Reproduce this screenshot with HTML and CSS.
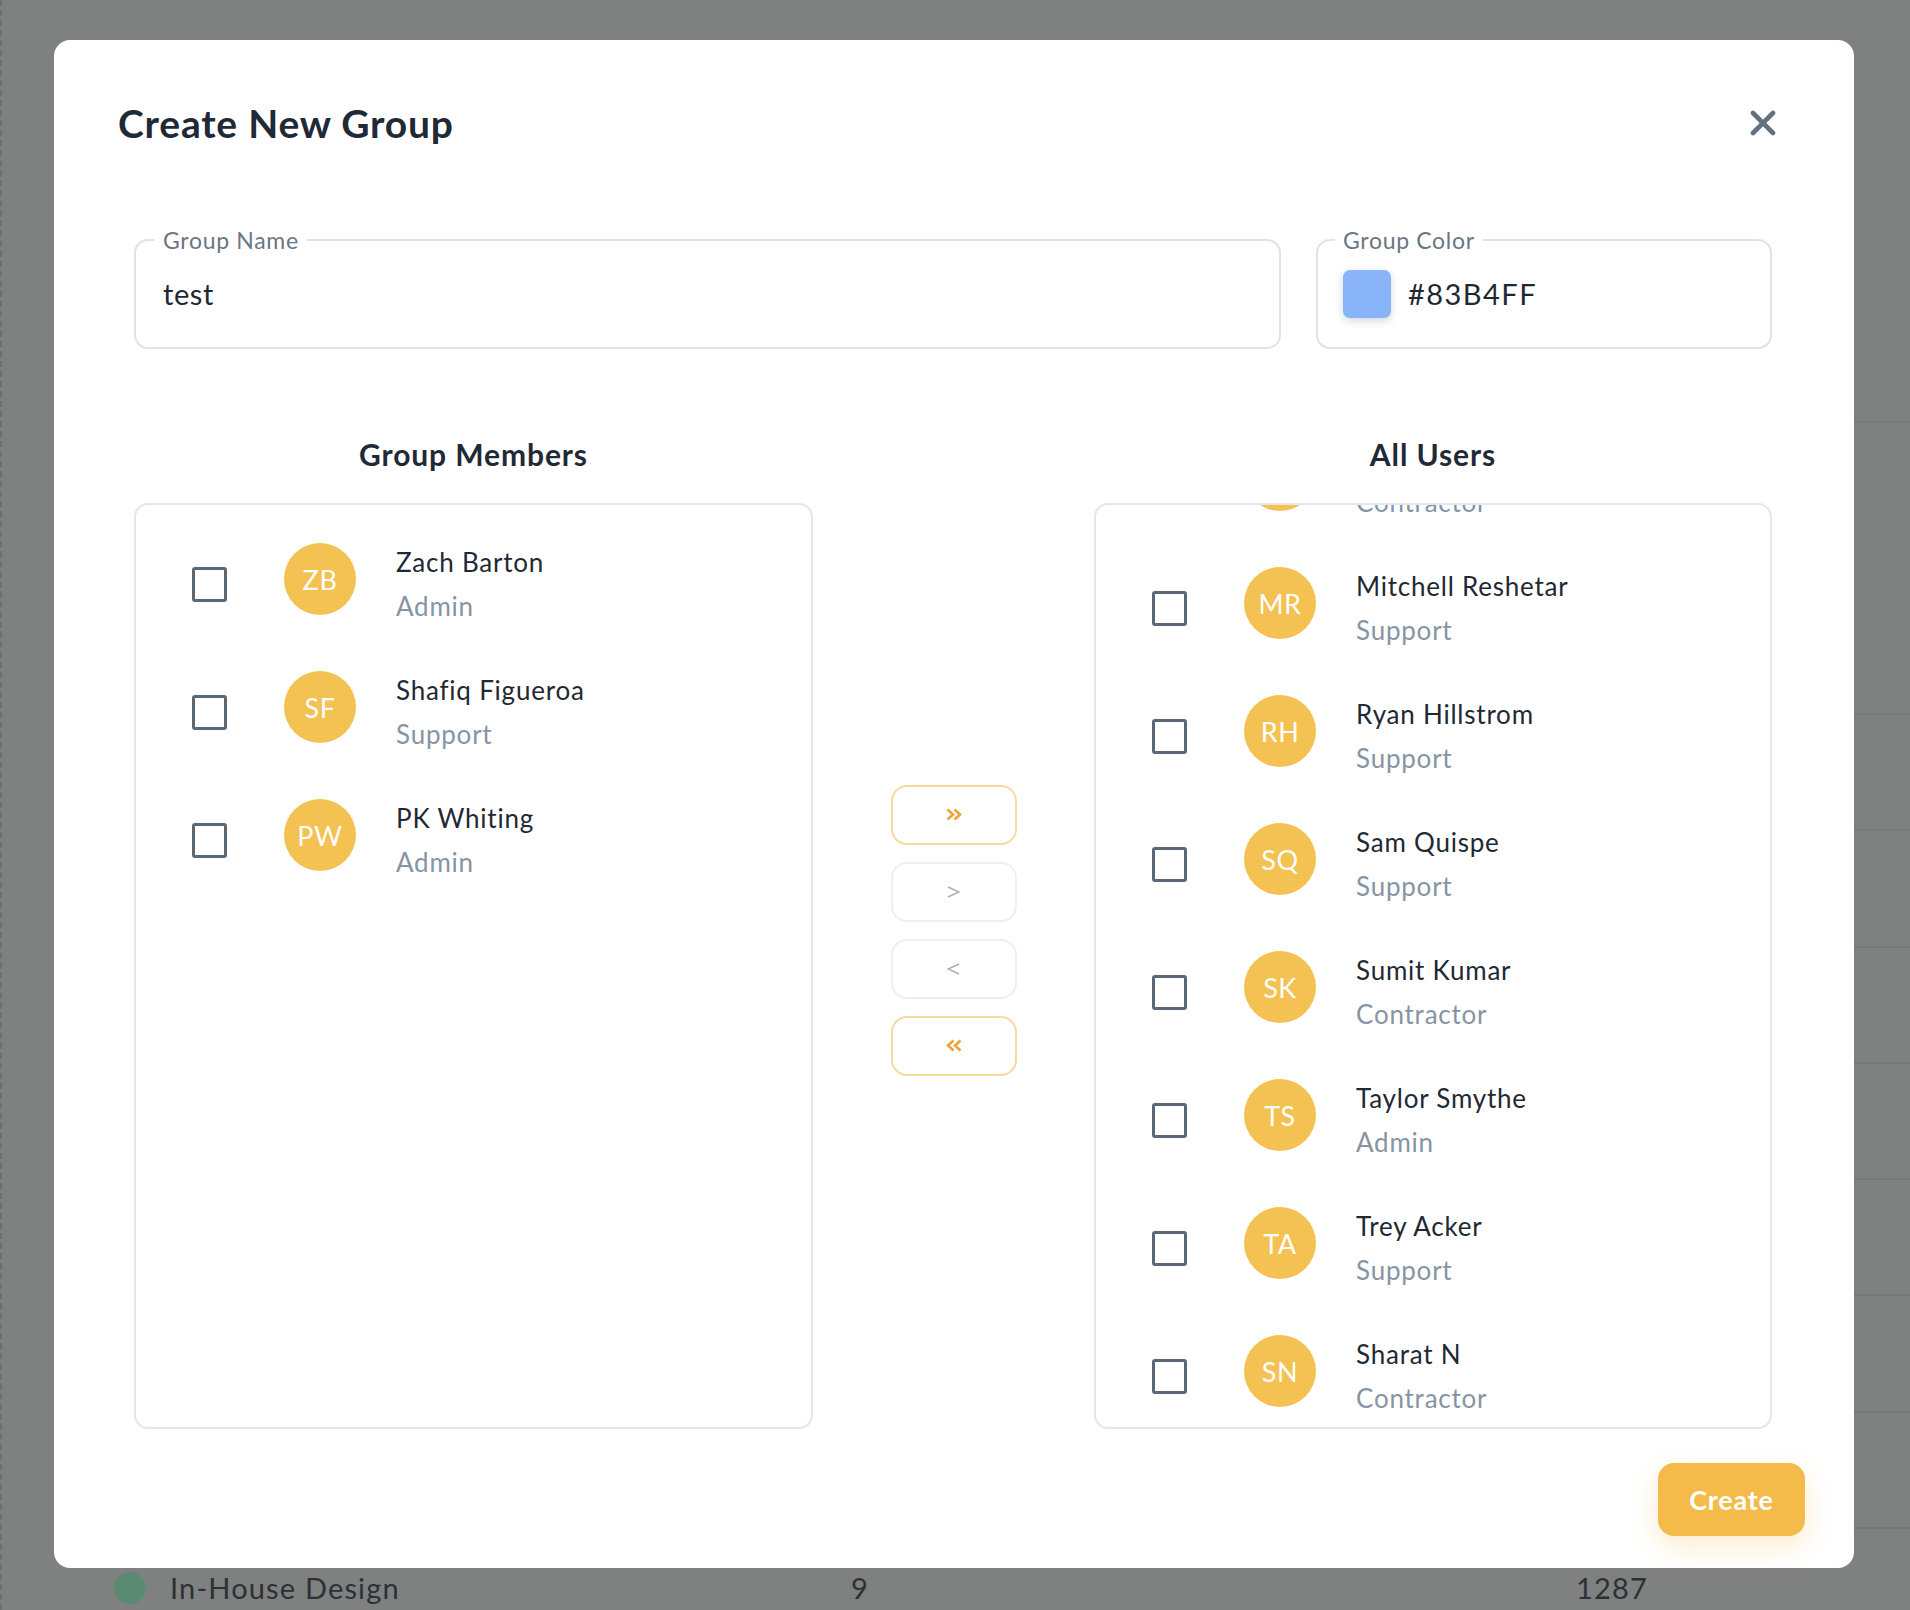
FILE: index.html
```html
<!DOCTYPE html>
<html lang="en">
<head>
<meta charset="utf-8">
<title>Create New Group</title>
<link rel="stylesheet" href="styles.css">
</head>
<body>
<div class="page">
  <div class="bg-table">
    <div class="bg-row bg-row-head"></div>
    <div class="bg-row bg-row-tall"></div>
    <div class="bg-row"></div>
    <div class="bg-row"></div>
    <div class="bg-row"></div>
    <div class="bg-row"></div>
    <div class="bg-row"></div>
    <div class="bg-row"></div>
    <div class="bg-row"></div>
    <div class="bg-row bg-row-data">
      <span class="bg-dot"></span>
      <span class="bg-name">In-House Design</span>
      <span class="bg-count">9</span>
      <span class="bg-total">1287</span>
    </div>
  </div>
</div>

<div class="modal">
  <div class="modal-header">
    <h1 class="modal-title">Create New Group</h1>
    <button class="close-btn" aria-label="Close">
      <svg width="26" height="26" viewBox="0 0 26 26"><path d="M3 3 L23 23 M23 3 L3 23" stroke="#627080" stroke-width="4.6" stroke-linecap="round" fill="none"/></svg>
    </button>
  </div>

  <div class="fields">
    <fieldset class="field field-name">
      <legend>Group Name</legend>
      <div class="field-value">test</div>
    </fieldset>
    <fieldset class="field field-color">
      <legend>Group Color</legend>
      <div class="field-value color-value"><span class="swatch"></span><span>#83B4FF</span></div>
    </fieldset>
  </div>

  <div class="transfer">
    <div class="list-col">
      <h2 class="list-title">Group Members</h2>
      <div class="panel">
        <div class="list">
          <div class="row"><span class="check"></span><span class="avatar">ZB</span><div class="info"><div class="name">Zach Barton</div><div class="role">Admin</div></div></div>
          <div class="row"><span class="check"></span><span class="avatar">SF</span><div class="info"><div class="name">Shafiq Figueroa</div><div class="role">Support</div></div></div>
          <div class="row"><span class="check"></span><span class="avatar">PW</span><div class="info"><div class="name">PK Whiting</div><div class="role">Admin</div></div></div>
        </div>
      </div>
    </div>

    <div class="mid-col">
      <button class="move-btn active" aria-label="Move all right">
        <svg width="16" height="13" viewBox="0 0 16 13"><path d="M1.5 1.5 L7 6.5 L1.5 11.5 M8.5 1.5 L14 6.5 L8.5 11.5" stroke="#eda33a" stroke-width="2.6" fill="none"/></svg>
      </button>
      <button class="move-btn" aria-label="Move right">
        <svg width="13" height="12" viewBox="0 0 13 12"><path d="M1 1 L12 6 L1 11" stroke="#a4adb9" stroke-width="1.5" fill="none"/></svg>
      </button>
      <button class="move-btn" aria-label="Move left">
        <svg width="13" height="12" viewBox="0 0 13 12"><path d="M12 1 L1 6 L12 11" stroke="#a4adb9" stroke-width="1.5" fill="none"/></svg>
      </button>
      <button class="move-btn active" aria-label="Move all left">
        <svg width="16" height="13" viewBox="0 0 16 13"><path d="M14.5 1.5 L9 6.5 L14.5 11.5 M7.5 1.5 L2 6.5 L7.5 11.5" stroke="#eda33a" stroke-width="2.6" fill="none"/></svg>
      </button>
    </div>

    <div class="list-col">
      <h2 class="list-title">All Users</h2>
      <div class="panel">
        <div class="list list-scrolled">
          <div class="row"><span class="check"></span><span class="avatar"></span><div class="info"><div class="name">&nbsp;</div><div class="role">Contractor</div></div></div>
          <div class="row"><span class="check"></span><span class="avatar">MR</span><div class="info"><div class="name">Mitchell Reshetar</div><div class="role">Support</div></div></div>
          <div class="row"><span class="check"></span><span class="avatar">RH</span><div class="info"><div class="name">Ryan Hillstrom</div><div class="role">Support</div></div></div>
          <div class="row"><span class="check"></span><span class="avatar">SQ</span><div class="info"><div class="name">Sam Quispe</div><div class="role">Support</div></div></div>
          <div class="row"><span class="check"></span><span class="avatar">SK</span><div class="info"><div class="name">Sumit Kumar</div><div class="role">Contractor</div></div></div>
          <div class="row"><span class="check"></span><span class="avatar">TS</span><div class="info"><div class="name">Taylor Smythe</div><div class="role">Admin</div></div></div>
          <div class="row"><span class="check"></span><span class="avatar">TA</span><div class="info"><div class="name">Trey Acker</div><div class="role">Support</div></div></div>
          <div class="row"><span class="check"></span><span class="avatar">SN</span><div class="info"><div class="name">Sharat N</div><div class="role">Contractor</div></div></div>
        </div>
      </div>
    </div>
  </div>

  <div class="modal-footer">
    <button class="create-btn">Create</button>
  </div>
</div>
</body>
</html>
```

FILE: styles.css
```css
* { box-sizing: border-box; }

html, body {
  margin: 0;
  padding: 0;
}

body {
  width: 1910px;
  height: 1610px;
  overflow: hidden;
  background: #7f8080;
  font-family: Lato, "Open Sans", sans-serif;
  color: #1f2933;
  position: relative;
}

/* background page under the overlay */
.page {
  height: 1610px;
  border-left: 2px dashed #6d6e6f;
  padding-left: 81px;
}

.bg-table {
  display: flex;
  flex-direction: column;
}

.bg-row {
  height: 116.3px;
  flex: none;
  border-bottom: 2px solid #767777;
}

.bg-row-head { height: 423px; }
.bg-row-tall { height: 292px; }

.bg-row-data {
  height: 117px;
  border-bottom: none;
  display: flex;
  align-items: center;
  font-size: 29px;
  letter-spacing: 0.04em;
  color: #2d3135;
}

.bg-dot {
  width: 32px;
  height: 32px;
  border-radius: 50%;
  background: #5b8a73;
  margin-left: 31px;
}

.bg-name {
  margin-left: 24px;
  width: 681px;
}

.bg-count {
  width: 725px;
}

/* modal */
.modal {
  position: absolute;
  left: 54px;
  top: 40px;
  width: 1800px;
  background: #ffffff;
  border-radius: 16px;
  padding: 0 82px 32px 80px;
}

.modal-header {
  display: flex;
  align-items: center;
  justify-content: space-between;
  margin: 0 -16px;
  padding: 58px 12px 0 0;
}

.modal-title {
  margin: 0;
  font-size: 39px;
  line-height: 50px;
  font-weight: 700;
  letter-spacing: 0.02em;
  color: #1f2a36;
}

.close-btn {
  border: none;
  background: none;
  padding: 0;
  width: 26px;
  height: 26px;
  display: block;
}

.close-btn svg { display: block; }

/* fields */
.fields {
  display: flex;
  gap: 35px;
  margin-top: 80px;
}

.field {
  margin: 0;
  border: 2px solid #dfe3e8;
  border-radius: 14px;
  padding: 18px 25px 29px 27px;
  min-width: 0;
}

.field legend {
  font-size: 23px;
  line-height: 24px;
  letter-spacing: 0.03em;
  color: #6b7684;
  padding: 0 8px;
  margin-left: -8px;
}

.field-name { width: 1147px; }
.field-color { width: 456px; padding-left: 25px; }

.field-value {
  height: 48px;
  line-height: 48px;
  font-size: 29px;
  letter-spacing: 0.02em;
  color: #1e2833;
}

.color-value {
  display: flex;
  align-items: center;
  gap: 17px;
  letter-spacing: 0.05em;
}

.swatch {
  width: 48px;
  height: 48px;
  border-radius: 7px;
  background: #8ab4fa;
  box-shadow: 0 3px 8px rgba(30, 40, 60, 0.18);
}

/* transfer lists */
.transfer {
  display: grid;
  grid-template-columns: 679px 1fr 678px;
  margin-top: 82px;
}

.list-title {
  margin: 0 0 26px;
  text-align: center;
  font-size: 30px;
  line-height: 46px;
  font-weight: 700;
  letter-spacing: 0.03em;
  color: #1f2a36;
}

.panel {
  height: 926px;
  border: 2px solid #e3e6ea;
  border-radius: 14px;
  overflow: hidden;
  padding-top: 15px;
}

.list {
  display: flex;
  flex-direction: column;
}

.list-scrolled {
  margin-top: -104px;
}

.row {
  height: 128px;
  flex: none;
  display: flex;
  align-items: center;
  padding-left: 56px;
}

.check {
  width: 35px;
  height: 35px;
  border: 3px solid #5b6876;
  border-radius: 3px;
  flex: none;
}

.avatar {
  width: 72px;
  height: 72px;
  border-radius: 50%;
  background: #f4c153;
  color: #ffffff;
  font-size: 27px;
  letter-spacing: 0.02em;
  display: flex;
  align-items: center;
  justify-content: center;
  margin-left: 57px;
  margin-bottom: 10px;
  flex: none;
}

.info {
  margin-left: 40px;
  display: flex;
  flex-direction: column;
  gap: 8px;
}

.name {
  font-size: 26px;
  line-height: 36px;
  letter-spacing: 0.03em;
  color: #1f2933;
}

.role {
  font-size: 26px;
  line-height: 36px;
  letter-spacing: 0.03em;
  color: #8794a3;
}

.mid-col {
  align-self: center;
  display: flex;
  flex-direction: column;
  align-items: center;
  gap: 17px;
}

.move-btn {
  width: 126px;
  height: 60px;
  border: 2px solid #eeeff1;
  border-radius: 16px;
  background: #ffffff;
  display: flex;
  align-items: center;
  justify-content: center;
  padding: 0;
}

.move-btn.active {
  border-color: #fad89a;
}

.move-btn svg { display: block; }

/* footer */
.modal-footer {
  display: flex;
  justify-content: flex-end;
  margin: 34px -33px 0 0;
}

.create-btn {
  width: 147px;
  height: 73px;
  border: none;
  border-radius: 16px;
  background: #f4bb4b;
  color: #ffffff;
  font-family: Lato, "Open Sans", sans-serif;
  font-size: 27px;
  font-weight: 700;
  letter-spacing: 0.03em;
  box-shadow: 0 10px 28px rgba(244, 187, 75, 0.28);
  padding: 0;
}
```
